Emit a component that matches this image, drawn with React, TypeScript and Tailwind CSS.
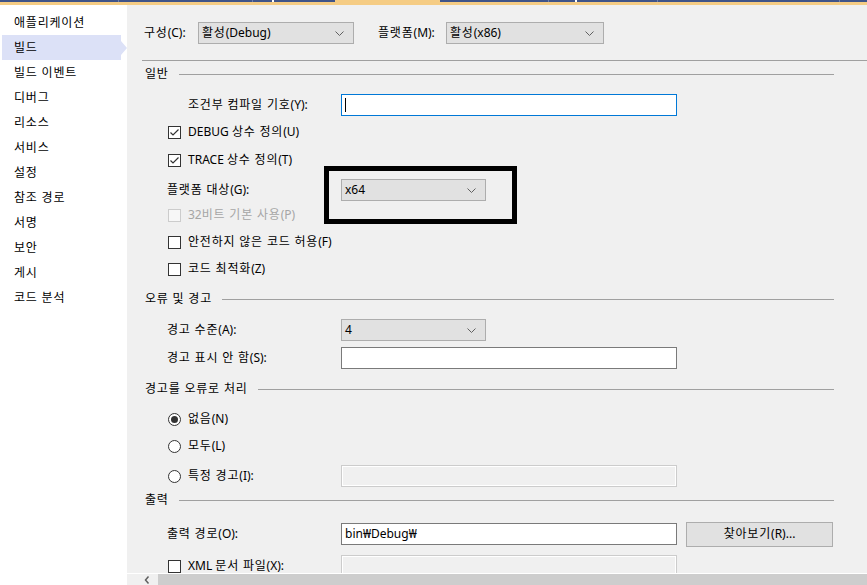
import type { ReactNode } from 'react'

const SIDEBAR = ['애플리케이션', '빌드', '빌드 이벤트', '디버그', '리소스', '서비스', '설정', '참조 경로', '서명', '보안', '게시', '코드 분석']

// Malgun Gothic's hangul runs a little wider than Noto's, so widen only the hangul runs
function ko(text: string) {
  return text.split(/([\uAC00-\uD7A3][\uAC00-\uD7A3 ]*)/).map((part, i) =>
    /[\uAC00-\uD7A3]/.test(part) ? (
      <span key={i} className="tracking-[0.8px]">
        {part}
      </span>
    ) : (
      part
    ),
  )
}

function Chevron() {
  return (
    <svg width="9" height="5" viewBox="0 0 9 5" className="shrink-0">
      <path d="M0.5 0.5 L4.5 4.5 L8.5 0.5" fill="none" stroke="#606060" strokeWidth="1" />
    </svg>
  )
}

function Dropdown({ value, width }: { value: string; width: string }) {
  return (
    <div className={`flex h-[22px] items-center justify-between border border-[#adadad] bg-[#e1e1e1] pl-[3px] pr-[9px] ${width}`}>
      <span>{ko(value)}</span>
      <Chevron />
    </div>
  )
}

function Box({ checked, disabled }: { checked?: boolean; disabled?: boolean }) {
  return (
    <div
      className={`flex h-[13px] w-[13px] shrink-0 items-center justify-center border ${
        disabled ? 'border-[#cccccc] bg-[#f7f7f7]' : 'border-[#333333] bg-white'
      }`}
    >
      {checked ? (
        <svg width="11" height="11" viewBox="0 0 11 11">
          <path d="M1.5 5.5 L4 8 L9.5 2.5" fill="none" stroke="#333333" strokeWidth="1.2" />
        </svg>
      ) : null}
    </div>
  )
}

function Radio({ checked }: { checked?: boolean }) {
  return (
    <div className="flex h-[13px] w-[13px] shrink-0 items-center justify-center rounded-full border border-[#333333] bg-white">
      {checked ? <div className="h-[7px] w-[7px] rounded-full bg-[#333333]" /> : null}
    </div>
  )
}

function Heading({ label, mt }: { label: string; mt: string }) {
  return (
    <div className={`flex h-[22px] items-center pl-[18px] pr-[33px] ${mt}`}>
      <span>{ko(label)}</span>
      <div className="ml-[10px] h-px flex-1 bg-[#a0a0a0]" />
    </div>
  )
}

function Row({ mt, children, className = '' }: { mt: string; children: ReactNode; className?: string }) {
  return <div className={`flex h-[22px] items-center ${mt} ${className}`}>{children}</div>
}

function TextBox({ children, variant = 'normal' }: { children?: ReactNode; variant?: 'normal' | 'focus' | 'disabled' }) {
  const look =
    variant === 'focus'
      ? 'border-[#0078d7] bg-white'
      : variant === 'disabled'
        ? 'border-[#cccccc] bg-[#f0f0f0] shadow-[inset_0_0_0_1px_#ffffff]'
        : 'border-[#7a7a7a] bg-white'
  return <div className={`flex h-[22px] w-[336px] shrink-0 items-center border px-[3px] ${look}`}>{children}</div>
}

function TopBar() {
  const seg = 'h-[2px] bg-[#3f5489]'
  const sep = 'h-[2px] w-px bg-[#6f80ad]'
  return (
    <div className="flex h-[5px] shrink-0 flex-col">
      <div className="flex h-[2px]">
        <div className={`${seg} w-[118px]`} />
        <div className={sep} />
        <div className={`${seg} w-[133px]`} />
        <div className={sep} />
        <div className={`${seg} w-[19px]`} />
        <div className="h-[2px] w-[2px] bg-white" />
        <div className={`${seg} w-[61px]`} />
        <div className="h-[2px] w-[105px] bg-[#f5cc84]" />
        <div className={`${seg} w-[108px]`} />
        <div className={sep} />
        <div className={`${seg} w-[26px]`} />
        <div className="h-[2px] w-[2px] bg-white" />
        <div className={`${seg} w-[80px]`} />
        <div className={sep} />
        <div className={`${seg} w-[181px]`} />
        <div className={sep} />
        <div className={`${seg} flex-1`} />
      </div>
      <div className="h-[3px] bg-[#f5cc84]" />
    </div>
  )
}

function Sidebar() {
  return (
    <div className="w-[127px] shrink-0 bg-white pt-[5px]">
      {SIDEBAR.map((item) =>
        item === '빌드' ? (
          <div key={item} className="flex h-[25px] items-center">
            <div className="ml-[2px] flex h-[25px] w-[119px] items-center bg-[#dce1f7] pl-[12px]">{ko(item)}</div>
            <div className="h-0 w-0 border-y-[7px] border-l-[6px] border-y-transparent border-l-[#dce1f7]" />
          </div>
        ) : (
          <div key={item} className="flex h-[25px] items-center pl-[14px]">
            {ko(item)}
          </div>
        ),
      )}
    </div>
  )
}

function ScrollBar() {
  return (
    <div className="flex h-[12px] shrink-0 border-t border-white bg-[#f0f0f0]">
      <div className="flex w-[31px] items-center justify-end pr-[8px]">
        <svg width="6" height="8" viewBox="0 0 6 8">
          <path d="M4.5 0.5 L1.5 4 L4.5 7.5" fill="none" stroke="#606060" strokeWidth="1.5" />
        </svg>
      </div>
      <div className="flex-1 bg-[#cdcdcd]" />
    </div>
  )
}

export default function App() {
  return (
    <div className="flex h-[585px] w-[867px] flex-col overflow-hidden bg-[#f0f0f0] font-['Noto_Sans','Noto_Sans_CJK_KR',sans-serif] text-[12px] leading-none text-black">
      <TopBar />
      <div className="flex min-h-0 flex-1">
        <Sidebar />
        <div className="flex min-w-0 flex-1 flex-col">
          <div className="relative min-h-0 flex-1 overflow-hidden">
            <Row mt="mt-[17px]" className="pl-[17px]">
              <span className="w-[54px]">{ko('구성(C):')}</span>
              <Dropdown value="활성(Debug)" width="w-[156px]" />
              <span className="ml-[24px] w-[68px]">{ko('플랫폼(M):')}</span>
              <Dropdown value="활성(x86)" width="w-[158px]" />
            </Row>
            <div className="ml-[15px] mt-[16px] h-px bg-[#a0a0a0]" />

            <Heading label="일반" mt="mt-[2px]" />
            <Row mt="mt-[9px]" className="pl-[61px]">
              <span className="w-[153px]">{ko('조건부 컴파일 기호(Y):')}</span>
              <TextBox variant="focus">
                <div className="h-[14px] w-px bg-black" />
              </TextBox>
            </Row>
            <Row mt="mt-[5px]" className="pl-[41px]">
              <Box checked />
              <span className="ml-[7px]">{ko('DEBUG 상수 정의(U)')}</span>
            </Row>
            <Row mt="mt-[6px]" className="pl-[41px]">
              <Box checked />
              <span className="ml-[7px]">{ko('TRACE 상수 정의(T)')}</span>
            </Row>
            <Row mt="mt-[8px]" className="relative pl-[40px]">
              <span className="w-[174px]">{ko('플랫폼 대상(G):')}</span>
              <Dropdown value="x64" width="w-[145px]" />
              <div className="absolute left-[197px] top-[-13px] h-[58px] w-[193px] border-[5px] border-black" />
            </Row>
            <Row mt="mt-[3px]" className="pl-[41px]">
              <Box disabled />
              <span className="ml-[7px] text-[#a6a6a6]">{ko('32비트 기본 사용(P)')}</span>
            </Row>
            <Row mt="mt-[5px]" className="pl-[41px]">
              <Box />
              <span className="ml-[7px]">{ko('안전하지 않은 코드 허용(F)')}</span>
            </Row>
            <Row mt="mt-[5px]" className="pl-[41px]">
              <Box />
              <span className="ml-[7px]">{ko('코드 최적화(Z)')}</span>
            </Row>

            <Heading label="오류 및 경고" mt="mt-[8px]" />
            <Row mt="mt-[9px]" className="pl-[40px]">
              <span className="w-[174px]">{ko('경고 수준(A):')}</span>
              <Dropdown value="4" width="w-[145px]" />
            </Row>
            <Row mt="mt-[6px]" className="pl-[40px]">
              <span className="w-[174px]">{ko('경고 표시 안 함(S):')}</span>
              <TextBox />
            </Row>

            <Heading label="경고를 오류로 처리" mt="mt-[9px]" />
            <Row mt="mt-[8px]" className="pl-[41px]">
              <Radio checked />
              <span className="ml-[7px]">{ko('없음(N)')}</span>
            </Row>
            <Row mt="mt-[5px]" className="pl-[41px]">
              <Radio />
              <span className="ml-[7px]">{ko('모두(L)')}</span>
            </Row>
            <Row mt="mt-[8px]" className="pl-[41px]">
              <Radio />
              <span className="ml-[7px] w-[153px]">{ko('특정 경고(I):')}</span>
              <TextBox variant="disabled" />
            </Row>

            <Heading label="출력" mt="mt-[2px]" />
            <Row mt="mt-[12px]" className="pl-[40px]">
              <span className="w-[174px]">{ko('출력 경로(O):')}</span>
              <TextBox>bin₩Debug₩</TextBox>
              <div className="ml-[9px] flex h-[25px] w-[147px] items-center justify-center border border-[#adadad] bg-[#e1e1e1]">
                {ko('찾아보기(R)...')}
              </div>
            </Row>
            <Row mt="mt-[10px]" className="pl-[41px]">
              <Box />
              <span className="ml-[7px] w-[153px]">{ko('XML 문서 파일(X):')}</span>
              <TextBox variant="disabled" />
            </Row>
          </div>
          <ScrollBar />
        </div>
      </div>
    </div>
  )
}
